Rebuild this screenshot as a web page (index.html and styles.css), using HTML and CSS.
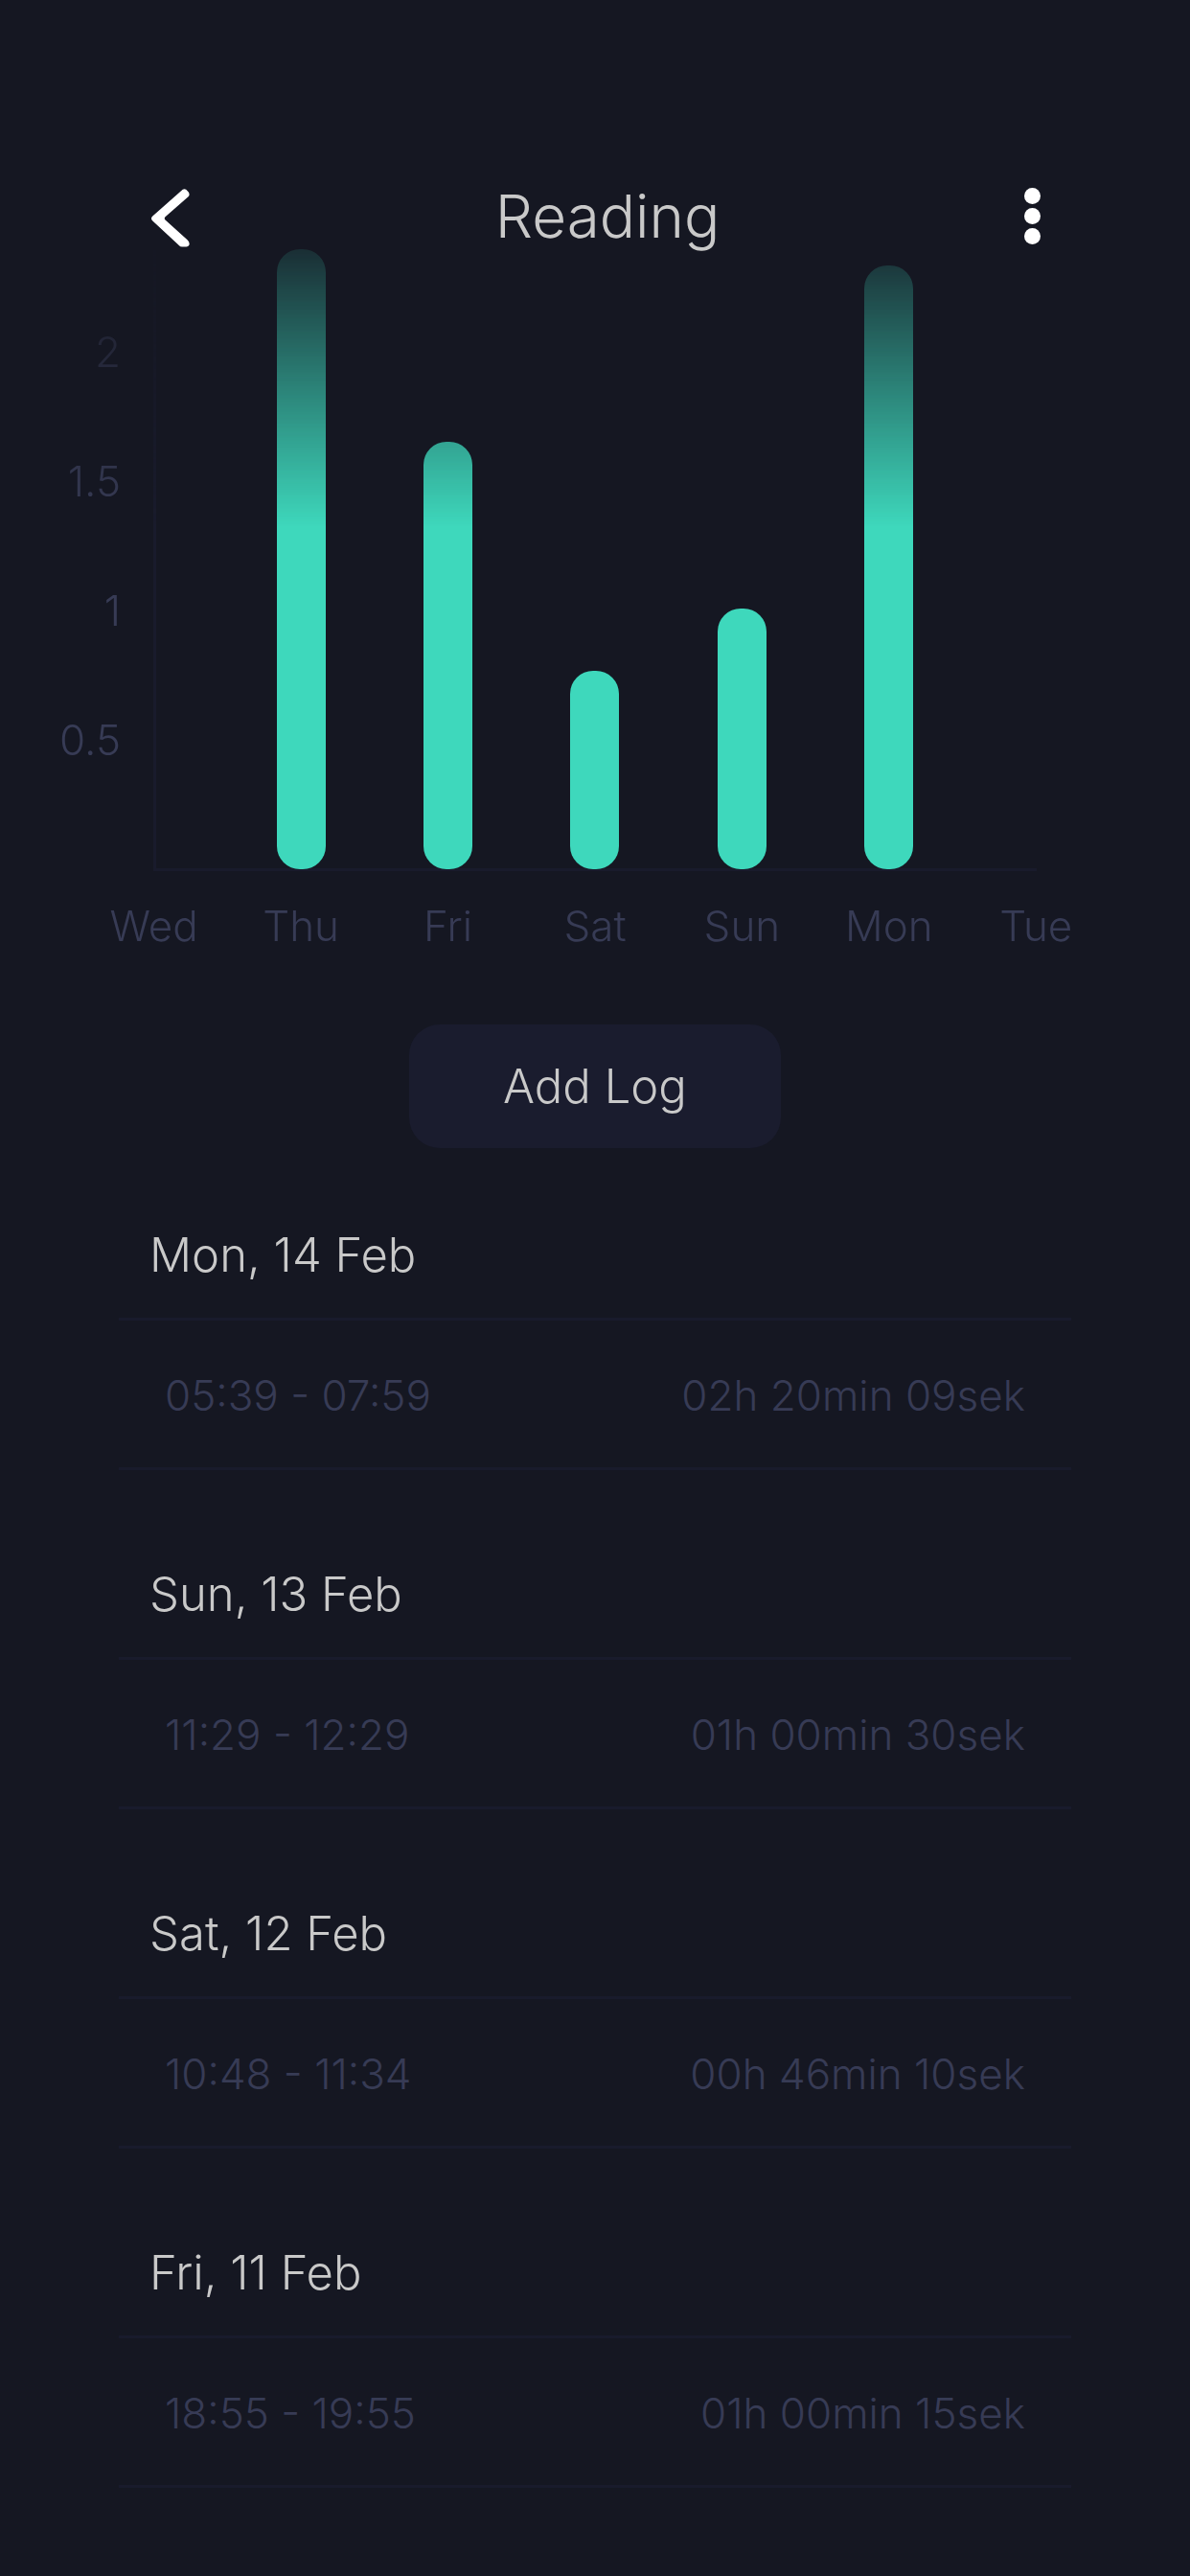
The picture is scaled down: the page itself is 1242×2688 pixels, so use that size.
FILE: index.html
```html
<!DOCTYPE html>
<html lang="en">
<head>
<meta charset="utf-8">
<meta name="viewport" content="width=device-width, initial-scale=1">
<title>Reading</title>
<link rel="stylesheet" href="styles.css">
</head>
<body>
<header class="topbar">
  <button class="icon-button" type="button" aria-label="Back">
    <svg width="42" height="64" viewBox="0 0 42 64" aria-hidden="true">
      <path d="M33.700 1.800L2.300 29.500Q-0.400 32 2.300 34.500L30 60.200Q31 61.500 33 61.500H37.500Q39.500 61.500 40.500 59.500Q41.200 56.500 38.500 54.300L15.500 33.500Q14 32 15.500 30.300L39.500 9.300Q41.500 7.500 39.800 4.600L37.200 1.800Q35.400 0.500 33.700 1.800Z" fill="#fff"/>
    </svg>
  </button>
  <h1 class="title">Reading</h1>
  <button class="icon-button" type="button" aria-label="More options">
    <svg width="17" height="64" viewBox="0 0 17 64" aria-hidden="true">
      <g fill="#fff"><circle cx="8.500" cy="8.500" r="8.500"/><circle cx="8.500" cy="29.500" r="8.500"/><circle cx="8.500" cy="50.500" r="8.500"/></g>
    </svg>
  </button>
</header>

<main>
  <section class="chart" aria-label="Hours per day">
    <div class="plot">
      <div class="axes"></div>
      <ol class="hours">
        <li>2</li><li>1.5</li><li>1</li><li>0.5</li>
      </ol>
      <div class="bars">
        <span class="bar" style="height:0%"></span>
        <span class="bar" style="height:100%"></span>
        <span class="bar" style="height:69%"></span>
        <span class="bar" style="height:32%"></span>
        <span class="bar" style="height:42%"></span>
        <span class="bar" style="height:97.400%"></span>
        <span class="bar" style="height:0%"></span>
      </div>
    </div>
    <ol class="days">
      <li>Wed</li><li>Thu</li><li>Fri</li><li>Sat</li><li>Sun</li><li>Mon</li><li>Tue</li>
    </ol>
  </section>

  <button class="add-log" type="button">Add Log</button>

  <div class="logs">
    <section class="log">
      <h2 class="log-date">Mon, 14 Feb</h2>
      <p class="entry"><span>05:39 - 07:59</span><span>02h 20min 09sek</span></p>
    </section>
    <section class="log">
      <h2 class="log-date">Sun, 13 Feb</h2>
      <p class="entry"><span>11:29 - 12:29</span><span>01h 00min 30sek</span></p>
    </section>
    <section class="log">
      <h2 class="log-date">Sat, 12 Feb</h2>
      <p class="entry"><span>10:48 - 11:34</span><span>00h 46min 10sek</span></p>
    </section>
    <section class="log">
      <h2 class="log-date">Fri, 11 Feb</h2>
      <p class="entry"><span>18:55 - 19:55</span><span>01h 00min 15sek</span></p>
    </section>
  </div>
</main>
</body>
</html>
```

FILE: styles.css
```css
:root {
  --bg: #151722;
  --surface: #1a1c2e;
  --line: #191b2c;
  --text: #c9c9c9;
  --muted: #373b55;
  --accent: #3ed8bc;
  --hour: 270px;
}

* {
  box-sizing: border-box;
  margin: 0;
  padding: 0;
}

body {
  min-height: 100vh;
  background: var(--bg);
  color: var(--muted);
  font-family: Inter, "Liberation Sans", sans-serif;
  font-size: 44px;
  font-weight: 300;
  line-height: 60px;
}

ol {
  list-style: none;
}

button {
  border: 0;
  background: none;
  font: inherit;
  color: inherit;
  cursor: pointer;
}

.topbar {
  display: flex;
  justify-content: space-between;
  align-items: flex-start;
  padding: 196px 156px 0 157px;
}

.icon-button {
  display: flex;
}

.title {
  color: var(--text);
  font-size: 62px;
  font-weight: 300;
  line-height: 60px;
}

main {
  display: flex;
  flex-direction: column;
}

/* The upper part of the chart fades out under the top bar. */
.chart {
  -webkit-mask-image: linear-gradient(to bottom, transparent -40px, #000 290px);
  mask-image: linear-gradient(to bottom, transparent -40px, #000 290px);
}

.plot {
  display: grid;
  height: 647px;
}

.plot > * {
  grid-area: 1 / 1;
}

.axes {
  margin: 0 160px -2px;
  border-left: 3px solid var(--line);
  border-bottom: 3px solid var(--line);
}

.hours {
  display: flex;
  flex-direction: column;
  justify-content: flex-end;
  width: 126px;
  padding-bottom: calc(var(--hour) / 4);
  text-align: right;
}

.hours li {
  height: calc(var(--hour) / 2);
  line-height: calc(var(--hour) / 2);
}

.bars,
.days {
  display: grid;
  grid-template-columns: repeat(7, 1fr);
  margin: 0 84px;
}

.bars {
  align-items: end;
  justify-items: center;
}

.bar {
  width: 51px;
  border-radius: 24px;
  background: var(--accent);
}

.days {
  padding-top: 29px;
  text-align: center;
}

.add-log {
  align-self: center;
  width: 388px;
  margin-top: 73px;
  border-radius: 32px;
  background: var(--surface);
  color: var(--text);
  font-size: 49px;
  line-height: 129px;
}

.logs {
  display: flex;
  flex-direction: column;
  gap: 100px;
  padding: 82px 124px 92px;
}

.log-date {
  padding: 0 32px 35px;
  color: var(--text);
  font-size: 49px;
  font-weight: 300;
  line-height: 60px;
}

.entry {
  display: flex;
  justify-content: space-between;
  padding: 48px 48px 45px;
  border-top: 3px solid var(--line);
  border-bottom: 3px solid var(--line);
}
```
